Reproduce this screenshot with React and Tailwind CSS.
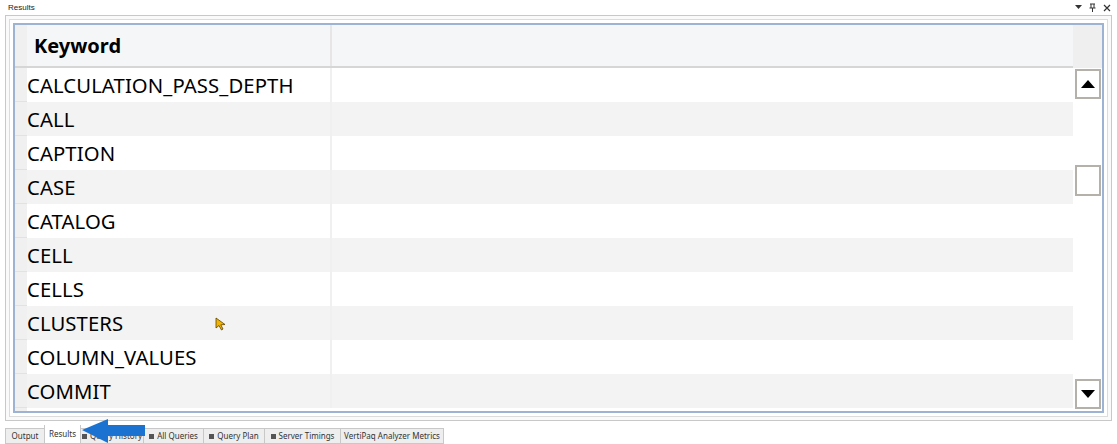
import React from 'react';

const rows = [
  'CALCULATION_PASS_DEPTH',
  'CALL',
  'CAPTION',
  'CASE',
  'CATALOG',
  'CELL',
  'CELLS',
  'CLUSTERS',
  'COLUMN_VALUES',
  'COMMIT',
];

const tabs = [
  { label: 'Output', w: 'w-[40px]' },
  { label: 'Results', w: 'w-[37px]', active: true },
  { label: 'Query History', w: 'w-[64px]', dot: true },
  { label: 'All Queries', w: 'w-[61px]', dot: true },
  { label: 'Query Plan', w: 'w-[62px]', dot: true },
  { label: 'Server Timings', w: 'w-[77px]', dot: true },
  { label: 'VertiPaq Analyzer Metrics', w: 'w-[104px]' },
];

const ScrollButton = ({ up }) => (
  <div className="w-[26px] h-[30px] border-2 border-[#b4b0aa] bg-white flex items-center justify-center">
    <svg width="14" height="8" viewBox="0 0 14 8">
      {up ? <polygon points="7,0 14,8 0,8" fill="#000" /> : <polygon points="0,0 14,0 7,8" fill="#000" />}
    </svg>
  </div>
);

const App = () => {
  return (
    <div className="w-[1117px] h-[444px] bg-white relative overflow-hidden font-['Segoe_UI','Noto_Sans',sans-serif] text-black">
      {/* title bar */}
      <div className="h-[15px] flex items-center justify-between pl-[8px] pr-[6px]">
        <span className="text-[8px] leading-none text-[#222] font-['Liberation_Sans',sans-serif]">Results</span>
        <div className="flex items-center gap-[7px] text-[#222]">
          <svg width="7" height="5" viewBox="0 0 7 5"><polygon points="0,0 7,0 3.5,4" fill="#333" /></svg>
          <svg width="7" height="9" viewBox="0 0 7 9"><path d="M1 1h5M2 1v4M5 1v4M0.5 5h6M3.5 5v4" stroke="#333" strokeWidth="1" fill="none" /></svg>
          <svg width="8" height="8" viewBox="0 0 8 8"><path d="M1 1l6 6M7 1l-6 6" stroke="#333" strokeWidth="1.2" /></svg>
        </div>
      </div>

      {/* panel */}
      <div className="mx-[5px] h-[406px] border border-[#c8c8c8] p-[3px] bg-[#fafafa]">
        <div className="h-full border border-[#dcdcdc] p-[3px] bg-white">
          <div className="h-full border-2 border-[#9db3d4] flex bg-white">
            {/* left row-header strip */}
            <div className="w-[12px] flex flex-col bg-[#f0f0f0]">
              <div className="h-[43px] border-b-2 border-[#d6d6d6]" />
              {rows.map((r) => (
                <div key={r} className="h-[34px] border-b border-[#e2e2e2]" />
              ))}
            </div>
            {/* data */}
            <div className="flex-1 flex flex-col">
              <div className="h-[43px] flex bg-[#f5f6f8] border-b-2 border-[#d6d6d6]">
                <div className="w-[305px] border-r-2 border-[#e6e6e6] flex items-center pl-[7px] text-[20px] font-bold">
                  Keyword
                </div>
                <div className="flex-1" />
              </div>
              {rows.map((r, i) => (
                <div key={r} className={`h-[34px] flex ${i % 2 === 1 ? 'bg-[#f3f3f3]' : 'bg-white'}`}>
                  <div className="w-[305px] border-r-2 border-[#f0f0f0] flex items-center text-[20.3px] tracking-[0.1px]">
                    {r}
                  </div>
                  <div className="flex-1 relative">
                    {r === 'CLUSTERS' && (
                      <svg className="absolute left-[-117px] top-[11px]" width="12" height="14" viewBox="0 0 12 14">
                        <polygon points="1,1 1,11 4,8.5 6.5,13 8,12 5.8,7.8 10,7.5" fill="#f2b400" stroke="#5a4300" strokeWidth="0.8" />
                      </svg>
                    )}
                  </div>
                </div>
              ))}
            </div>
            {/* scrollbar */}
            <div className="w-[29px] flex flex-col bg-white">
              <div className="h-[43px] bg-[#efefef] border-b-2 border-[#efefef]" />
              <div className="flex-1 flex flex-col items-center pt-[1px] pb-[2px]">
                <ScrollButton up />
                <div className="h-[66px]" />
                <div className="w-[26px] h-[31px] border-2 border-[#b4b0aa] bg-white" />
                <div className="flex-1" />
                <ScrollButton />
              </div>
            </div>
          </div>
        </div>
      </div>

      {/* tabs */}
      <div className="flex items-end pl-[6px] mt-[4px] font-['Segoe_UI','Noto_Sans',sans-serif] text-[8px] text-[#333]">
        {tabs.map((t) => (
          <div
            key={t.label}
            className={`${t.w} flex items-center justify-center gap-[3px] whitespace-nowrap border border-[#c8c8c8] -ml-px ${
              t.active ? 'bg-white h-[19px] border-t-0' : 'bg-[#eeeeee] h-[16px]'
            }`}
          >
            {t.dot && <span className="w-[5px] h-[5px] bg-[#555]" />}
            {t.label}
          </div>
        ))}
      </div>

      {/* blue arrow annotation */}
      <svg className="absolute left-[82px] top-[419px]" width="64" height="24" viewBox="0 0 64 24">
        <polygon points="0,11 26,0 26,6 63,6 63,17 26,17 26,24" fill="#1c72d0" />
      </svg>
    </div>
  );
};

export default App;
